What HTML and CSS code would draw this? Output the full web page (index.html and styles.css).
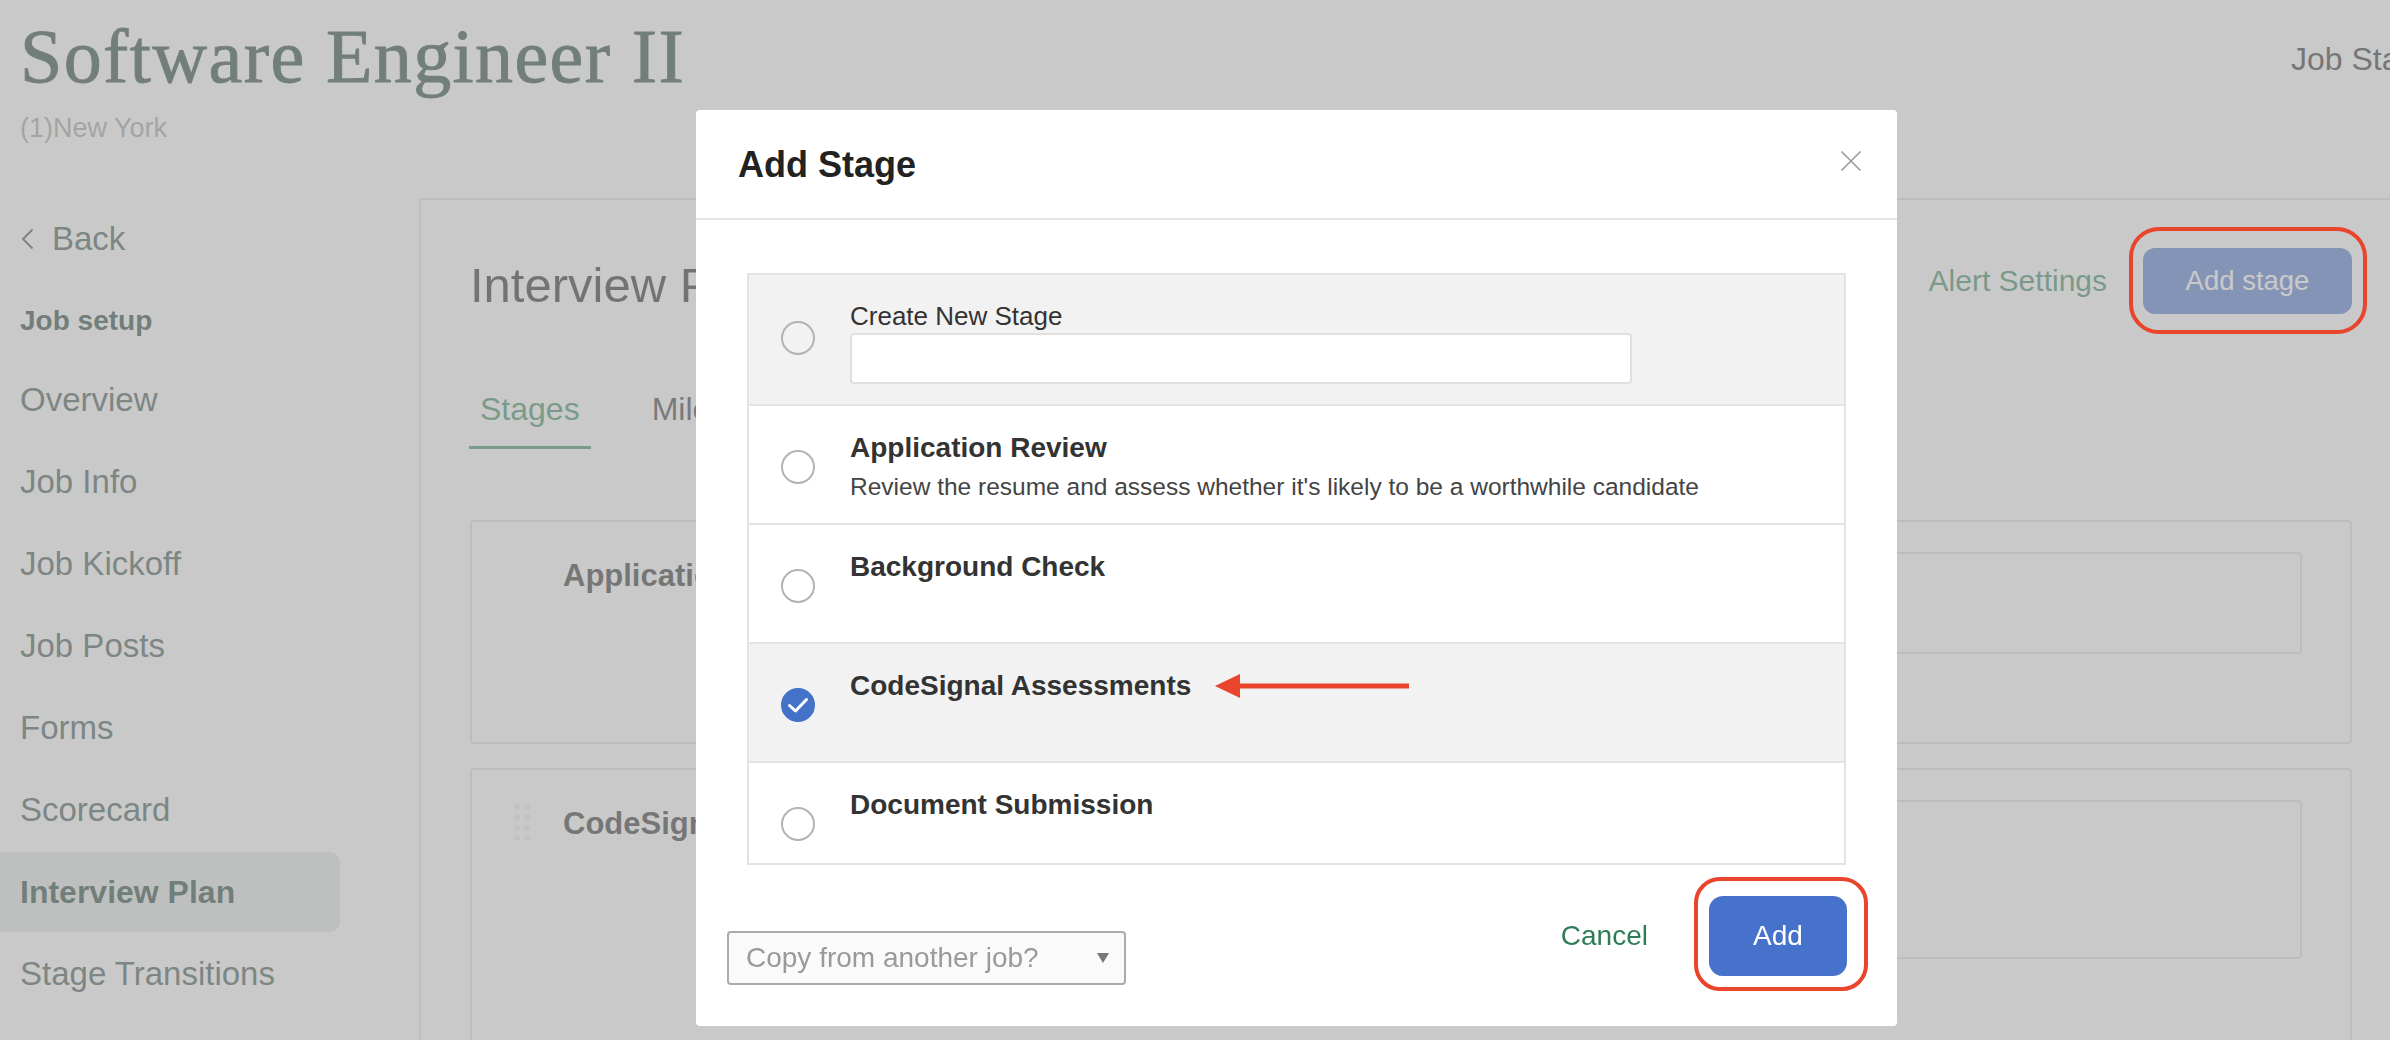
FILE: index.html
```html
<!DOCTYPE html>
<html lang="en">
<head>
    <meta charset="UTF-8">
    <meta name="viewport" content="width=device-width, initial-scale=1.0">
    <title>Software Engineer II - Interview Plan</title>
    <link rel="stylesheet" href="styles.css">
</head>
<body>
    <div class="page">
        <header class="job-header">
            <div>
                <h1>Software Engineer II</h1>
                <p class="job-location">(1)New York</p>
            </div>
            <div class="job-status">Job Status: Open</div>
        </header>

        <div class="layout">
            <nav class="sidebar">
                <a class="nav-back" href="#">
                    <svg width="13" height="22" viewBox="0 0 13 22"><path d="M11.5 1.5 L2 11 L11.5 20.5" fill="none" stroke="currentColor" stroke-width="2"/></svg>
                    Back
                </a>
                <div class="nav-heading">Job setup</div>
                <a class="nav-item" href="#">Overview</a>
                <a class="nav-item" href="#">Job Info</a>
                <a class="nav-item" href="#">Job Kickoff</a>
                <a class="nav-item" href="#">Job Posts</a>
                <a class="nav-item" href="#">Forms</a>
                <a class="nav-item" href="#">Scorecard</a>
                <a class="nav-item active" href="#">Interview Plan</a>
                <a class="nav-item" href="#">Stage Transitions</a>
            </nav>

            <section class="panel">
                <div class="panel-header">
                    <h2>Interview Plan</h2>
                    <div class="panel-actions">
                        <a class="link-green" href="#">Alert Settings</a>
                        <span class="marked"><button class="btn-stage">Add stage</button></span>
                    </div>
                </div>

                <div class="tabs">
                    <span class="tab active">Stages</span>
                    <span class="tab">Milestones</span>
                </div>

                <div class="stages">
                    <div class="stage-card">
                        <span class="drag-handle locked"></span>
                        <h3>Application Review</h3>
                        <div class="stage-detail"></div>
                    </div>
                    <div class="stage-card tall">
                        <span class="drag-handle"></span>
                        <h3>CodeSignal Assessments</h3>
                        <div class="stage-detail"></div>
                    </div>
                </div>
            </section>
        </div>
    </div>

    <div class="backdrop"></div>

    <div class="modal">
        <div class="modal-header">
            <h2>Add Stage</h2>
            <button class="modal-close" title="Close">
                <svg width="22" height="22" viewBox="0 0 22 22"><path d="M1.5 1.5 L20.5 20.5 M20.5 1.5 L1.5 20.5" stroke="#9a9a9a" stroke-width="1.6"/></svg>
            </button>
        </div>

        <div class="modal-body">
            <div class="stage-list">
                <label class="stage-option create">
                    <span class="radio"></span>
                    <span class="option-body">
                        <span class="option-label">Create New Stage</span>
                        <input type="text" class="stage-name">
                    </span>
                </label>
                <label class="stage-option">
                    <span class="radio"></span>
                    <span class="option-body">
                        <span class="option-title">Application Review</span>
                        <span class="option-desc">Review the resume and assess whether it's likely to be a worthwhile candidate</span>
                    </span>
                </label>
                <label class="stage-option">
                    <span class="radio"></span>
                    <span class="option-body">
                        <span class="option-title">Background Check</span>
                    </span>
                </label>
                <label class="stage-option selected">
                    <span class="radio checked">
                        <svg width="30" height="30" viewBox="2 2 30 30"><path d="M8.5 17.5 L14.5 23 L25.5 11.5" fill="none" stroke="#fff" stroke-width="3" stroke-linecap="round" stroke-linejoin="round"/></svg>
                    </span>
                    <span class="option-body">
                        <span class="option-title">CodeSignal Assessments
                            <svg class="pointer-arrow" width="194" height="26" viewBox="0 0 194 26"><polygon points="0,13 25,1 25,25" fill="#e8452c"/><rect x="22" y="10.5" width="172" height="5" fill="#e8452c"/></svg>
                        </span>
                    </span>
                </label>
                <label class="stage-option">
                    <span class="radio"></span>
                    <span class="option-body">
                        <span class="option-title">Document Submission</span>
                    </span>
                </label>
            </div>
        </div>

        <div class="modal-footer">
            <div class="copy-select">Copy from another job?<span class="caret"></span></div>
            <div class="footer-actions">
                <a class="link-cancel" href="#">Cancel</a>
                <span class="callout"><button class="btn-add">Add</button></span>
            </div>
        </div>
    </div>
</body>
</html>
```

FILE: styles.css
```css
* {
    box-sizing: border-box;
}

html, body {
    margin: 0;
}

body {
    width: 2390px;
    height: 1040px;
    overflow: hidden;
    font-family: "Liberation Sans", Arial, sans-serif;
    background-color: #fff;
    color: #222;
}

a {
    text-decoration: none;
}

.page {
    width: 2390px;
}

/* job title bar */
.job-header {
    display: flex;
    justify-content: space-between;
    height: 198px;
    padding: 18px 0 0 20px;
}

.job-header h1 {
    margin: 0;
    font-family: "Liberation Serif", "Times New Roman", serif;
    font-weight: 400;
    font-size: 76px;
    line-height: 76px;
    letter-spacing: 1.4px;
    color: #15372c;
    -webkit-text-stroke: 0.9px #15372c;
}

.job-location {
    margin: 19px 0 0;
    font-size: 27px;
    line-height: 30px;
    color: #9b9b9b;
}

.job-status {
    flex-shrink: 0;
    width: 99px;
    margin-top: 21px;
    font-size: 32px;
    line-height: 40px;
    white-space: nowrap;
    color: #222;
}

.layout {
    display: grid;
    grid-template-columns: 419px 1fr;
}

/* left navigation */
.sidebar {
    display: flex;
    flex-direction: column;
}

.nav-back {
    display: flex;
    align-items: center;
    gap: 18px;
    height: 82px;
    padding-left: 21px;
    font-size: 33px;
    color: #304b43;
}

.nav-heading {
    height: 80px;
    line-height: 82px;
    padding-left: 20px;
    font-size: 28px;
    font-weight: 700;
    color: #15372c;
}

.nav-item {
    display: block;
    width: 340px;
    height: 80px;
    line-height: 80px;
    margin-bottom: 2px;
    padding-left: 20px;
    font-size: 33px;
    color: #304b43;
    border-radius: 0 10px 10px 0;
}

.nav-item.active {
    background-color: #e2e6e4;
    font-size: 32px;
    font-weight: 700;
    color: #15372c;
}

/* interview plan panel */
.panel {
    height: 842px;
    padding: 55px 38px 0 49px;
    border-top: 2px solid #dfdfdf;
    border-left: 2px solid #dfdfdf;
}

.panel-header {
    display: flex;
    justify-content: space-between;
    align-items: flex-start;
}

.panel-header h2 {
    margin: 0;
    font-size: 49px;
    font-weight: 400;
    line-height: 60px;
    color: #1a1a1a;
}

.panel-actions {
    display: flex;
    align-items: center;
    gap: 36px;
    margin-top: -7px;
}

.link-green {
    font-size: 30px;
    color: #2b7f57;
}

.btn-stage {
    width: 209px;
    height: 66px;
    border: none;
    border-radius: 12px;
    background-color: #4672cc;
    color: #fff;
    font-family: inherit;
    font-size: 27.5px;
}

/* red callout ring, drawn above the dimmed backdrop */
.marked {
    position: relative;
    display: flex;
}

.marked::after {
    content: "";
    position: absolute;
    top: -21px;
    left: -14px;
    right: -15px;
    bottom: -20px;
    z-index: 30;
    border: 4px solid #e8452c;
    border-radius: 30px;
}

.tabs {
    display: flex;
    gap: 50px;
    margin: 74px 0 0 -1px;
}

.tab {
    padding: 0 11px 17px;
    font-size: 32px;
    line-height: 40px;
    color: #2b2b2b;
}

.tab.active {
    color: #2b8156;
    border-bottom: 3px solid #2b8156;
}

.stages {
    margin-top: 71px;
}

.stage-card {
    display: flex;
    align-items: flex-start;
    height: 224px;
    margin-bottom: 24px;
    padding: 30px 48px 0 42px;
    border: 2px solid #dfdfdf;
    border-radius: 4px;
}

.stage-card.tall {
    height: 400px;
}

.drag-handle {
    flex-shrink: 0;
    width: 16px;
    height: 37px;
    margin-top: 4px;
    background-image: radial-gradient(circle, #ececec 0 3px, transparent 3.5px);
    background-size: 10px 10.3px;
    background-position: -2px -2px;
}

.drag-handle.locked {
    visibility: hidden;
}

.stage-card h3 {
    margin: 5px 0 0 33px;
    font-size: 31px;
    line-height: 38px;
    font-weight: 700;
    color: #222;
    white-space: nowrap;
}

.stage-detail {
    flex-shrink: 0;
    width: 1150px;
    height: 102px;
    margin-left: auto;
    border: 2px solid #dfdfdf;
    border-radius: 4px;
}

.stage-card.tall .stage-detail {
    height: 159px;
}

.backdrop {
    position: fixed;
    inset: 0;
    z-index: 10;
    background-color: rgba(169, 169, 169, 0.628);
}

/* add stage dialog */
.modal {
    position: absolute;
    top: 110px;
    left: 696px;
    z-index: 20;
    display: flex;
    flex-direction: column;
    width: 1201px;
    height: 916px;
    background-color: #fff;
    border-radius: 4px;
}

.modal-header {
    display: flex;
    align-items: center;
    justify-content: space-between;
    height: 110px;
    padding: 2px 35px 0 42px;
    border-bottom: 2px solid #e6e6e6;
}

.modal-header h2 {
    margin: 0;
    font-size: 36px;
    line-height: 44px;
    font-weight: 700;
    color: #222;
}

.modal-close {
    width: 22px;
    height: 22px;
    margin-top: -8px;
    padding: 0;
    border: none;
    background: none;
}

.modal-body {
    padding: 53px 51px 0;
}

.stage-list {
    height: 592px;
    overflow: hidden;
    border: 2px solid #e3e3e3;
}

.stage-option {
    display: flex;
    height: 119px;
    padding-left: 32px;
    border-bottom: 2px solid #e3e3e3;
}

.stage-option.create {
    height: 131px;
    background-color: #f2f2f2;
}

.stage-option.selected {
    background-color: #f2f2f2;
}

.radio {
    flex-shrink: 0;
    align-self: center;
    width: 34px;
    height: 34px;
    margin-top: 4px;
    border: 2px solid #b3b3b3;
    border-radius: 50%;
}

.stage-option.create .radio {
    margin-top: -3px;
}

.radio.checked {
    border-color: #4472c8;
    background-color: #4472c8;
}

.radio svg {
    display: block;
}

.option-body {
    display: flex;
    flex-direction: column;
    margin-left: 35px;
    padding-top: 25px;
}

.stage-option.create .option-body {
    padding: 26px 0 20px;
}

.option-label {
    font-size: 26px;
    line-height: 30px;
    color: #333;
}

.stage-name {
    width: 782px;
    height: 51px;
    margin-top: 2px;
    border: 2px solid #e0e0e0;
    border-radius: 4px;
    background-color: #fff;
}

.option-title {
    display: flex;
    align-items: center;
    font-size: 28px;
    line-height: 34px;
    font-weight: 700;
    color: #333;
}

.pointer-arrow {
    margin-left: 24px;
}

.option-desc {
    margin-top: 7px;
    font-size: 24.5px;
    line-height: 30px;
    color: #444;
}

.modal-footer {
    display: flex;
    justify-content: space-between;
    align-items: flex-start;
    padding: 12px 29px 0 31px;
}

.copy-select {
    display: flex;
    align-items: center;
    justify-content: space-between;
    width: 399px;
    height: 54px;
    margin-top: 54px;
    padding: 0 15px 0 17px;
    border: 2px solid #ababab;
    border-radius: 4px;
    background-color: #fafafa;
    font-size: 28px;
    color: #9a9a9a;
}

.caret {
    width: 0;
    height: 0;
    border-left: 6px solid transparent;
    border-right: 6px solid transparent;
    border-top: 10px solid #777;
}

.footer-actions {
    display: flex;
    align-items: center;
    gap: 46px;
}

.link-cancel {
    margin-top: 3px;
    font-size: 28px;
    line-height: 34px;
    color: #2f7c58;
}

.callout {
    display: flex;
    padding: 15px 17px 11px 11px;
    border: 4px solid #e8452c;
    border-radius: 26px;
}

.btn-add {
    width: 138px;
    height: 80px;
    border: none;
    border-radius: 14px;
    background-color: #4672cc;
    color: #fff;
    font-family: inherit;
    font-size: 28px;
}
```
